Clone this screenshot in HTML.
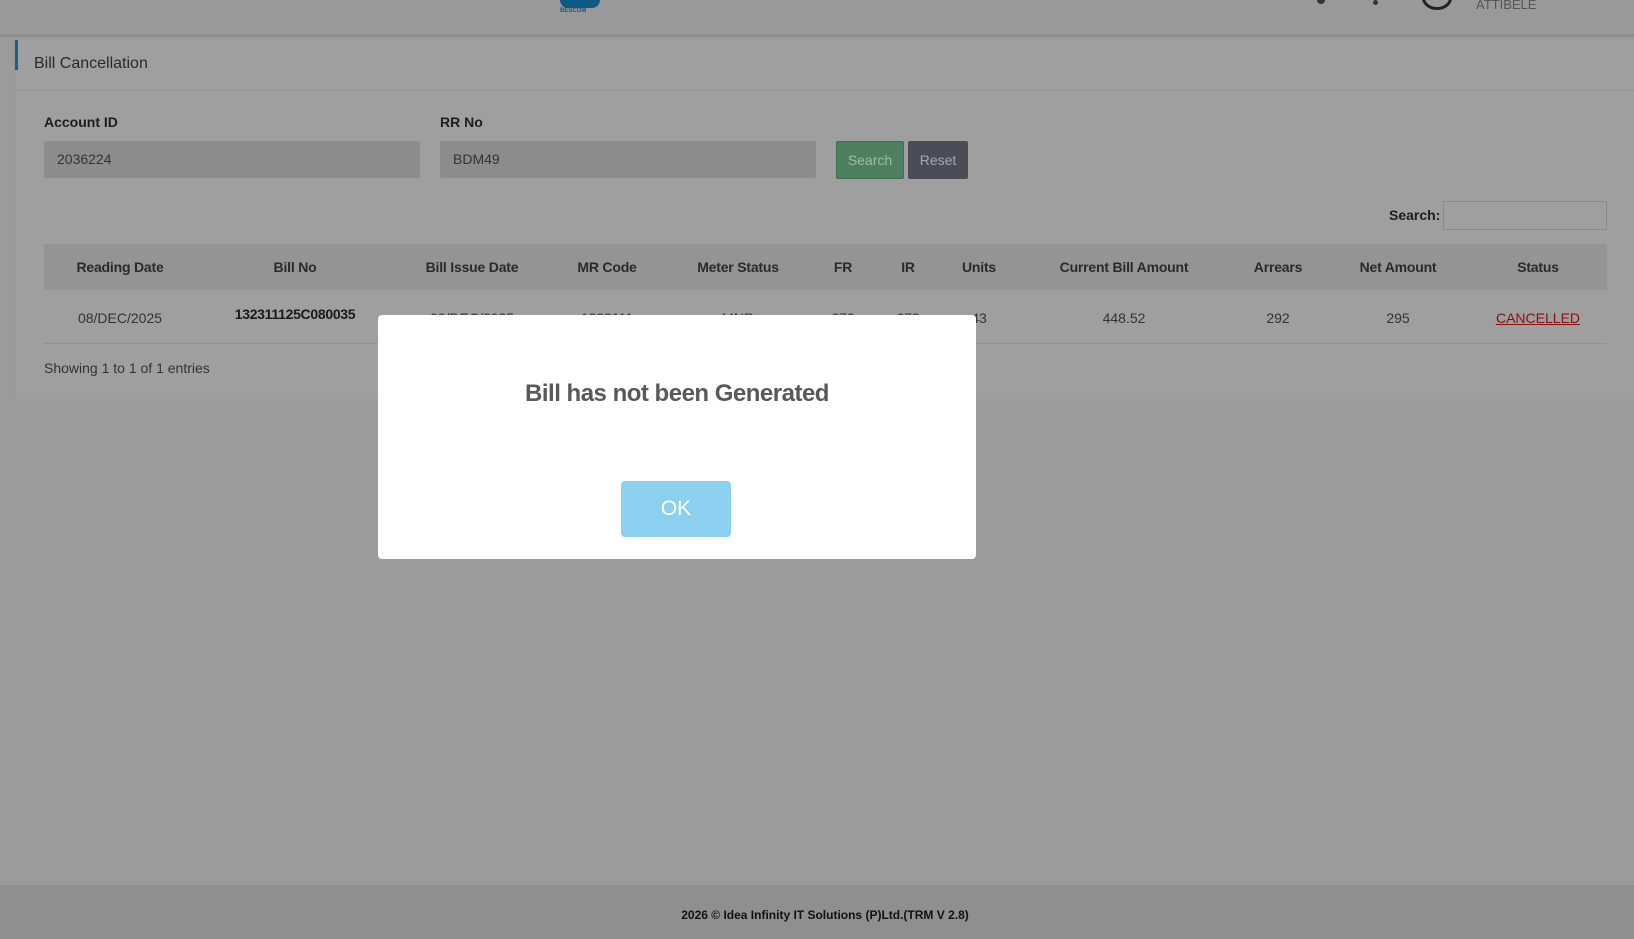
<!DOCTYPE html>
<html><head><meta charset="utf-8"><style>
*{box-sizing:border-box;margin:0;padding:0}
body{width:1634px;height:939px;background:#9b9b9b;font-family:"Liberation Sans",sans-serif;position:relative;overflow:hidden;color:#1e1e1e}
.hdr{position:absolute;left:0;top:0;width:1634px;height:37px;background:#999;border-bottom:3px solid #8e8e8e}
.card{position:absolute;left:14px;top:40px;width:1620px;height:359px;background:#9f9f9f;border-left:1px solid #949494}
.card .bar{position:absolute;left:0;top:0;width:3px;height:30px;background:#1a5f86}
.t{position:absolute;font-size:15px;white-space:nowrap}
.inp{position:absolute;height:37px;background:#8c8c8c;border-radius:2px;font-size:14px;color:#333;padding:10px 13px}
.th{position:absolute;top:259px;font-size:14px;font-weight:bold;color:#2a2a2a;transform:translateX(-50%);white-space:nowrap;letter-spacing:-0.2px}
.td{position:absolute;top:310px;font-size:14px;color:#333;transform:translateX(-50%);white-space:nowrap}
</style></head><body>
<div class="hdr">
<div style="position:absolute;left:560px;top:0;width:40px;height:8px;background:#0d5a85;border-radius:0 0 8px 8px"></div>
<div style="position:absolute;left:560px;top:8px;font-size:6px;color:#0d5a85;font-weight:bold">BESCOM</div>
<div style="position:absolute;left:1317px;top:0;width:8px;height:4px;background:#333;border-radius:0 0 4px 4px"></div>
<div style="position:absolute;left:1373px;top:0;width:5px;height:5px;background:#333;border-radius:50%"></div>
<div style="position:absolute;left:1422px;top:-14px;width:30px;height:24px;border:3px solid #222;border-radius:50%"></div>
<div style="position:absolute;left:1476px;top:-3px;font-size:13px;color:#555">ATTIBELE</div>
</div>
<div class="card"><div class="bar"></div>
<div style="position:absolute;left:0;top:50px;width:1620px;height:1px;background:#949494"></div>
</div>
<div class="t" style="left:34px;top:55px;font-size:16px;color:#2a2a2a">Bill Cancellation</div>
<div class="t" style="left:44px;top:114px;font-size:14px;font-weight:bold">Account ID</div>
<div class="t" style="left:440px;top:114px;font-size:14px;font-weight:bold">RR No</div>
<div class="inp" style="left:44px;top:141px;width:376px">2036224</div>
<div class="inp" style="left:440px;top:141px;width:376px">BDM49</div>
<div style="position:absolute;left:836px;top:141px;width:68px;height:38px;background:#4e7f5e;border:1px solid #3f7050;border-radius:2px;color:#9fbfa6;font-size:14px;text-align:center;line-height:36px">Search</div>
<div style="position:absolute;left:908px;top:141px;width:60px;height:38px;background:#4a4c58;border-radius:2px;color:#a8a8ae;font-size:14px;text-align:center;line-height:38px">Reset</div>
<div class="t" style="left:1389px;top:207px;font-size:14px;font-weight:bold">Search:</div>
<div style="position:absolute;left:1443px;top:201px;width:164px;height:29px;border:1px solid #8a8a8a;background:#9f9f9f"></div>
<div style="position:absolute;left:44px;top:244px;width:1563px;height:46px;background:#949494"></div>
<div style="position:absolute;left:44px;top:343px;width:1563px;height:1px;background:#929292"></div>
<div class="th" style="left:120px">Reading Date</div><div class="th" style="left:295px">Bill No</div><div class="th" style="left:472px">Bill Issue Date</div><div class="th" style="left:607px">MR Code</div><div class="th" style="left:738px">Meter Status</div><div class="th" style="left:843px">FR</div><div class="th" style="left:908px">IR</div><div class="th" style="left:979px">Units</div><div class="th" style="left:1124px">Current Bill Amount</div><div class="th" style="left:1278px">Arrears</div><div class="th" style="left:1398px">Net Amount</div><div class="th" style="left:1538px">Status</div>
<div class="td" style="left:120px">08/DEC/2025</div>
<div class="td" style="left:295px;top:306px;font-weight:bold;color:#1a1a1a;letter-spacing:-0.3px">132311125C080035</div>
<div class="td" style="left:472px">09/DEC/2025</div><div class="td" style="left:607px">1323111</div><div class="td" style="left:738px">MNR</div><div class="td" style="left:843px">673</div><div class="td" style="left:908px">673</div>
<div class="td" style="left:979px">43</div><div class="td" style="left:1124px">448.52</div><div class="td" style="left:1278px">292</div><div class="td" style="left:1398px">295</div>
<div class="td" style="left:1538px;color:#8a1010;text-decoration:underline">CANCELLED</div>
<div class="t" style="left:44px;top:360px;font-size:14px;color:#333">Showing 1 to 1 of 1 entries</div>
<div style="position:absolute;left:0;top:885px;width:1634px;height:54px;background:#8f8f8f"></div>
<div class="t" style="left:0;width:1650px;text-align:center;top:908px;font-size:12px;font-weight:bold;color:#111">2026 © Idea Infinity IT Solutions (P)Ltd.(TRM V 2.8)</div>
<div style="position:absolute;left:378px;top:315px;width:598px;height:244px;background:#fff;border-radius:4px">
<div style="position:absolute;left:0;width:100%;top:65px;text-align:center;font-size:24px;font-weight:bold;color:#595959;letter-spacing:-0.5px">Bill has not been Generated</div>
<div style="position:absolute;left:243px;top:166px;width:110px;height:56px;background:#8ccfee;border-radius:4px;color:#fff;font-size:21px;text-align:center;line-height:56px">OK</div>
</div>
</body></html>
